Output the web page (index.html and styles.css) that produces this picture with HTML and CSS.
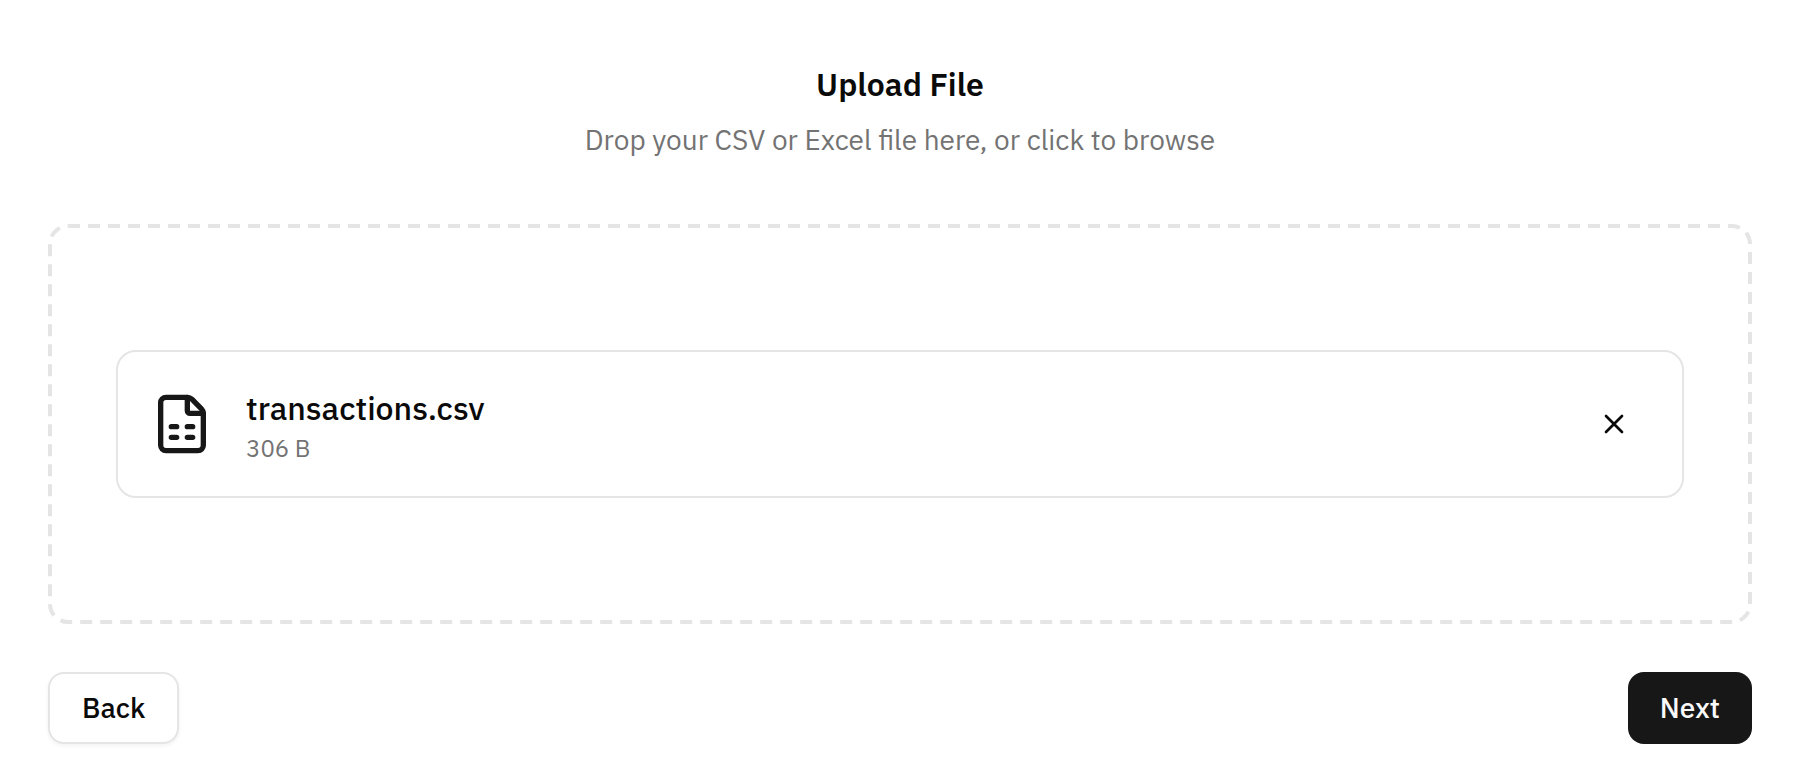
FILE: index.html
```html
<!DOCTYPE html>
<html lang="en">
<head>
    <meta charset="UTF-8">
    <meta name="viewport" content="width=device-width, initial-scale=1.0">
    <title>Upload File</title>
    <link rel="stylesheet" href="styles.css">
</head>
<body>
    <main class="upload">
        <header class="upload-header">
            <h1>Upload File</h1>
            <p>Drop your CSV or Excel file here, or click to browse</p>
        </header>

        <section class="dropzone">
            <!-- dashed outline -->
            <svg class="dropzone-outline" aria-hidden="true">
                <rect x="2" y="2" rx="18" />
            </svg>
            <div class="file-card">
                <svg class="file-icon" viewBox="0 0 24 24" aria-hidden="true">
                    <path d="M6 22a2 2 0 0 1-2-2V4a2 2 0 0 1 2-2h8a2.4 2.4 0 0 1 1.704.706l3.588 3.588A2.4 2.4 0 0 1 20 8v12a2 2 0 0 1-2 2z" />
                    <path d="M14 2v5a1 1 0 0 0 1 1h5" />
                    <path d="M8 13h2M14 13h2M8 17h2M14 17h2" />
                </svg>
                <div class="file-info">
                    <p class="file-name">transactions.csv</p>
                    <p class="file-size">306 B</p>
                </div>
                <button type="button" class="remove-btn" aria-label="Remove file">
                    <svg viewBox="0 0 24 24" aria-hidden="true">
                        <path d="M18 6 6 18M6 6l12 12" />
                    </svg>
                </button>
            </div>
        </section>

        <footer class="upload-actions">
            <button type="button" class="btn btn-outline">Back</button>
            <button type="button" class="btn btn-primary">Next</button>
        </footer>
    </main>
</body>
</html>
```
FILE: styles.css
```css
* {
    box-sizing: border-box;
}

body {
    font-family: "IBM Plex Sans", Roboto, sans-serif;
    background-color: #fff;
    color: #0a0a0a;
    margin: 0;
}

h1, p {
    margin: 0;
}

.upload {
    padding: 64px 48px 28px;
}

.upload-header {
    text-align: center;
    margin-bottom: 64px;
}

.upload-header h1 {
    font-size: 32px;
    line-height: 40px;
    font-weight: 600;
    margin-bottom: 16px;
}

.upload-header p {
    font-size: 28px;
    line-height: 40px;
    color: #737373;
}

.dropzone {
    position: relative;
    display: flex;
    align-items: center;
    min-height: 400px;
    padding: 68px;
}

.dropzone-outline {
    position: absolute;
    inset: 0;
    width: 100%;
    height: 100%;
    pointer-events: none;
}

.dropzone-outline rect {
    width: calc(100% - 4px);
    height: calc(100% - 4px);
    fill: none;
    stroke: #e5e5e5;
    stroke-width: 4px;
    stroke-dasharray: 12 8;
}

.file-card {
    display: flex;
    align-items: center;
    gap: 32px;
    width: 100%;
    padding: 32px;
    border: 2px solid #e5e5e5;
    border-radius: 20px;
    background-color: #fff;
}

.file-card svg {
    fill: none;
    stroke: currentColor;
    stroke-width: 2;
    stroke-linecap: round;
    stroke-linejoin: round;
}

.file-icon {
    width: 64px;
    height: 64px;
    color: #171717;
}

.file-info {
    flex: 1;
}

.file-name {
    font-size: 32px;
    line-height: 48px;
    font-weight: 500;
}

.file-size {
    font-size: 24px;
    line-height: 32px;
    color: #737373;
}

.remove-btn {
    display: flex;
    align-items: center;
    justify-content: center;
    width: 72px;
    height: 72px;
    padding: 0;
    border: none;
    border-radius: 16px;
    background: none;
    color: #0a0a0a;
    cursor: pointer;
}

.remove-btn svg {
    width: 32px;
    height: 32px;
}

.remove-btn:hover,
.btn-outline:hover {
    background-color: #f5f5f5;
}

.upload-actions {
    display: flex;
    justify-content: space-between;
    margin-top: 48px;
}

.btn {
    height: 72px;
    padding: 0 32px;
    border: none;
    border-radius: 16px;
    font-family: inherit;
    font-size: 28px;
    line-height: 40px;
    font-weight: 500;
    cursor: pointer;
}

.btn-outline {
    border: 2px solid #e5e5e5;
    background-color: #fff;
    color: #0a0a0a;
    box-shadow: 0 2px 4px rgba(0, 0, 0, 0.05);
}

.btn-primary {
    background-color: #171717;
    color: #fafafa;
}
```
